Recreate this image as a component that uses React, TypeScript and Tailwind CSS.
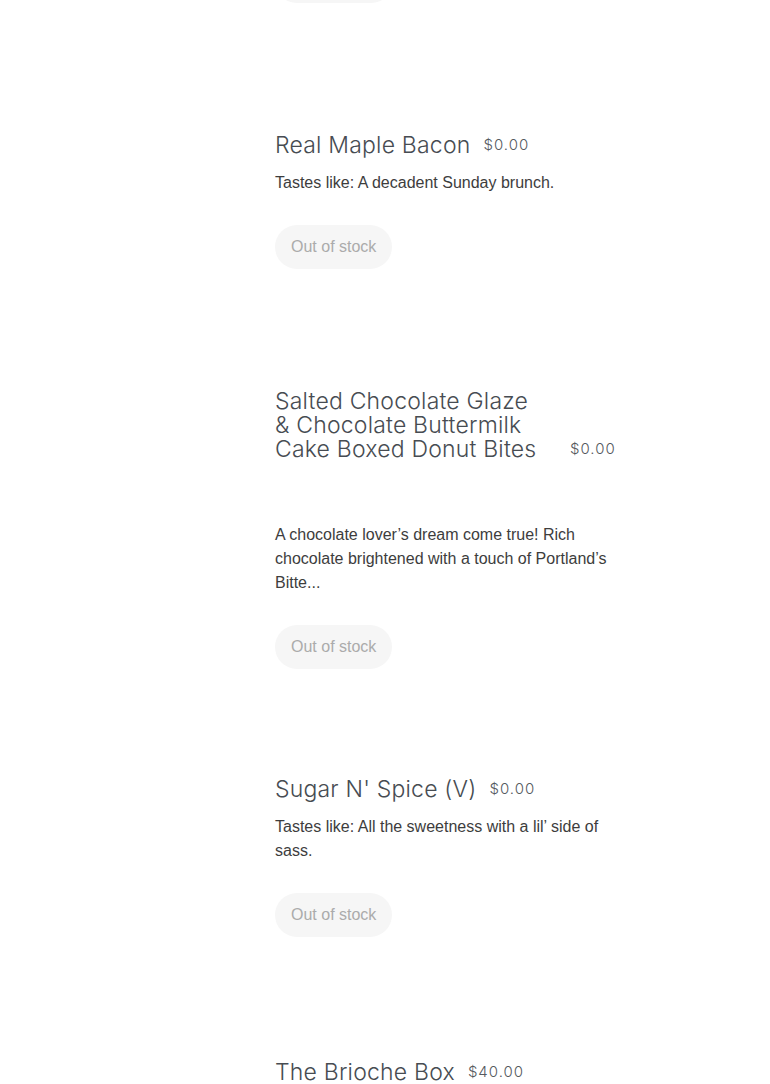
import React from 'react'

interface Item {
  title: React.ReactNode
  key: string
  price: string
  desc: string
  titleW?: string
  titleGap: string
  after: string
}

const items: Item[] = [
  {
    key: 'maple',
    title: 'Real Maple Bacon',
    price: '$0.00',
    desc: 'Tastes like: A decadent Sunday brunch.',
    titleGap: 'mt-[14px]',
    after: 'h-[120px]',
  },
  {
    key: 'salted',
    title: (
      <>
        Salted Chocolate Glaze
        <br />
        &amp; Chocolate Buttermilk
        <br />
        Cake Boxed Donut Bites
      </>
    ),
    price: '$0.00',
    desc: 'A chocolate lover\u2019s dream come true! Rich chocolate brightened with a touch of Portland\u2019s Bitte...',
    titleW: 'w-[282px]',
    titleGap: 'mt-[62px]',
    after: 'h-[108px]',
  },
  {
    key: 'sugar',
    title: "Sugar N' Spice (V)",
    price: '$0.00',
    desc: 'Tastes like: All the sweetness with a lil\u2019 side of sass.',
    titleGap: 'mt-[14px]',
    after: 'h-[123px]',
  },
]

const headFont = { fontFamily: 'Inter, "Noto Sans", sans-serif' }
const bodyFont = { fontFamily: '"Liberation Sans", Arial, sans-serif' }

function Heading({ title, price, w }: { title: React.ReactNode; price: string; w?: string }) {
  return (
    <div className="flex items-end gap-[13px]">
      <h3
        className={`${w ?? ''} shrink-0 text-[23px] leading-[24px] font-light text-[#474c52] tracking-[0.2px]`}
        style={headFont}
      >
        {title}
      </h3>
      <span
        className="shrink-0 pb-[3px] text-[15px] leading-[18px] font-light text-[#555a60] tracking-[1px] whitespace-nowrap"
        style={headFont}
      >
        {price}
      </span>
    </div>
  )
}

function StockButton() {
  return (
    <button
      disabled
      className="h-[44px] px-4 rounded-full bg-[#f6f6f6] text-[16px] text-[#ababab]"
      style={bodyFont}
    >
      Out of stock
    </button>
  )
}

export default function App() {
  return (
    <div className="min-h-screen bg-white overflow-hidden">
      <div className="pl-[275px]">
        {/* bottom edge of the previous product's button */}
        <div className="h-[3px] overflow-hidden">
          <div className="-mt-[41px] h-[44px] w-[118px] rounded-full bg-[#f6f6f6]" />
        </div>
        <div className="h-[130px]" />

        {items.map((it) => (
          <div key={it.key} className="w-[340px]">
            <Heading title={it.title} price={it.price} w={it.titleW} />
            <p
              className={`${it.titleGap} text-[16px] leading-[24px] text-[#3d3d3d]`}
              style={bodyFont}
            >
              {it.desc}
            </p>
            <div className="mt-[30px]">
              <StockButton />
            </div>
            <div className={it.after} />
          </div>
        ))}

        <div className="w-[340px]">
          <Heading title="The Brioche Box" price="$40.00" />
        </div>
      </div>
    </div>
  )
}
